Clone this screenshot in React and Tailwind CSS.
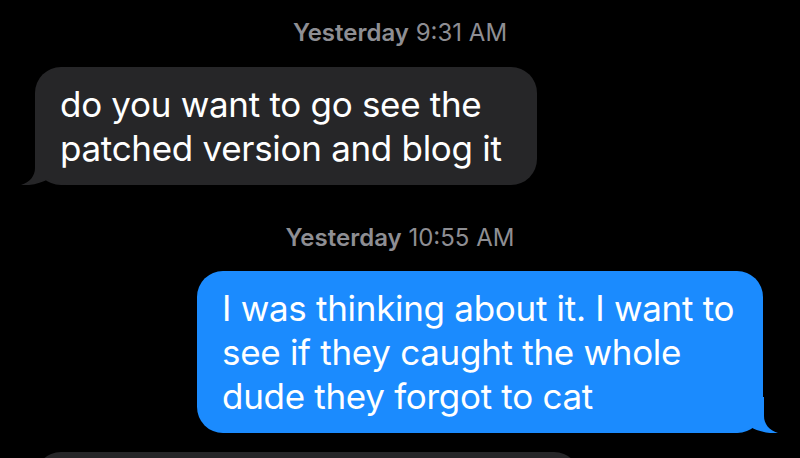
import React from "react";

function Stamp({ day, time, className }) {
  return (
    <div className={"text-center text-[24px] leading-[28px] text-[#8e8e93] " + className}>
      <span className="font-semibold">{day}</span> <span className="font-normal">{time}</span>
    </div>
  );
}

export default function App() {
  return (
    <div
      className="w-[800px] h-[458px] bg-black overflow-hidden flex flex-col"
      style={{ fontFamily: "Inter, 'Noto Sans', sans-serif" }}
    >
      <Stamp day="Yesterday" time="9:31 AM" className="mt-[19px]" />

      <div className="relative self-start ml-[35px] mt-[20px] w-[502px] h-[119px] rounded-[26px] bg-[#262628] px-[25px] py-[15px] text-white text-[35px] leading-[44px] tracking-[-0.3px] whitespace-nowrap">
        <svg className="absolute left-[-14px] bottom-0" width="50" height="36" viewBox="0 0 50 36">
          <path d="M14 0 L14 19 C14 27 9 33 0 36 C10 37 20 34 28 30 C33 34 40 36 48 36 L48 0 Z" fill="#262628" />
        </svg>
        <div className="relative">do you want to go see the<br />patched version and blog it</div>
      </div>

      <Stamp day="Yesterday" time="10:55 AM" className="mt-[39px]" />

      <div className="relative self-end mr-[37px] mt-[19px] w-[566px] h-[162px] rounded-[26px] bg-[#1b8bfe] px-[25px] py-[15px] text-white text-[35px] leading-[44px] tracking-[-0.3px] whitespace-nowrap">
        <svg className="absolute right-[-15px] bottom-0" width="50" height="36" viewBox="0 0 50 36">
          <path d="M36 0 L36 19 C36 27 41 33 50 36 C40 37 30 34 22 30 C17 34 10 36 2 36 L2 0 Z" fill="#1b8bfe" />
        </svg>
        <div className="relative">
          I was thinking about it. I want to<br />see if they caught the whole<br />dude they forgot to cat
        </div>
      </div>

      <div className="self-start ml-[35px] mt-[19px] w-[545px] h-[80px] shrink-0 rounded-[26px] bg-[#262628]" />
    </div>
  );
}
